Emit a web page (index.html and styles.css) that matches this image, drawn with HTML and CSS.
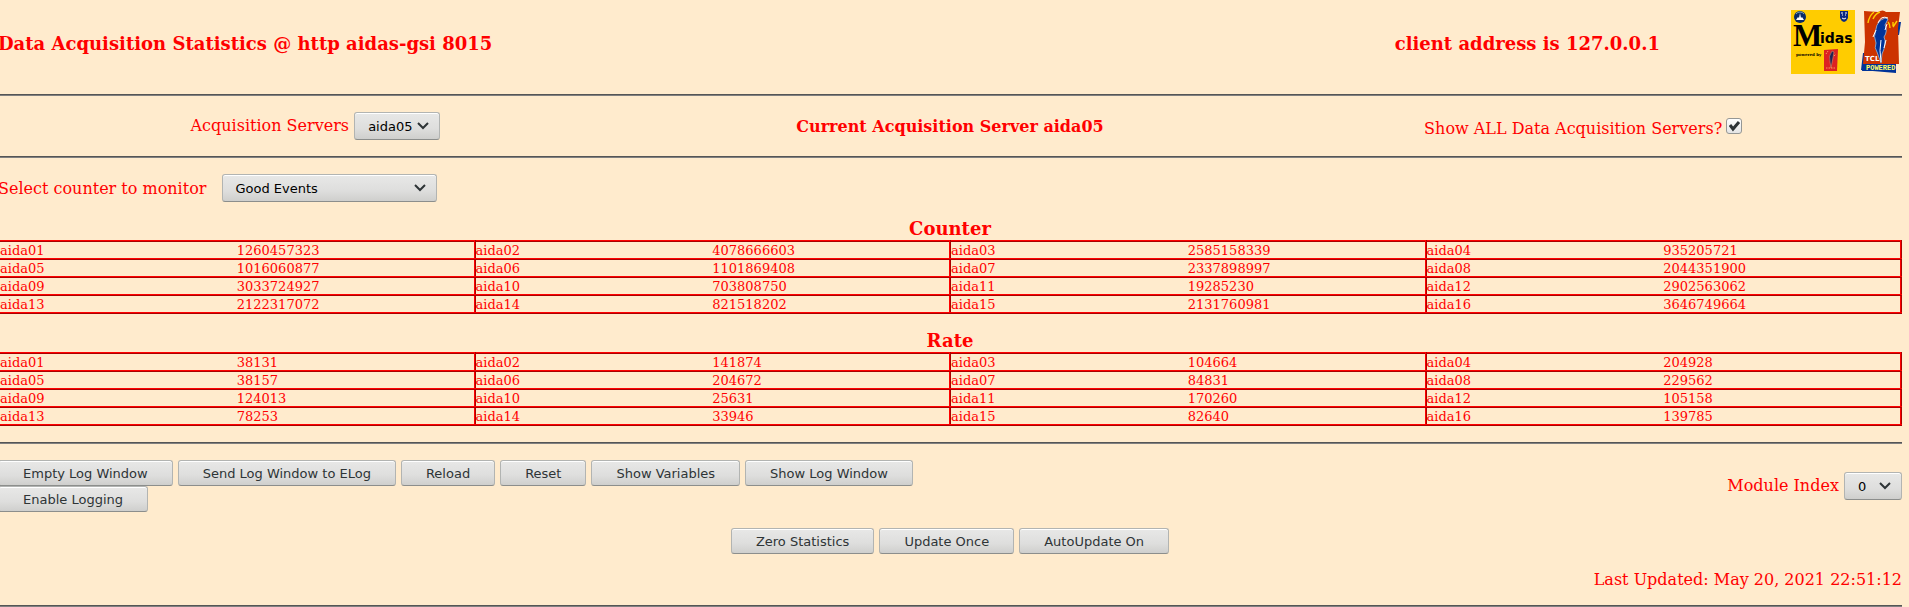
FILE: index.html
```
<!DOCTYPE html>
<html lang="en">
<head>
    <meta charset="UTF-8">
    <meta name="viewport" content="width=device-width, initial-scale=1.0">
    <title>Data Acquisition Statistics @ http aidas-gsi 8015</title>
    <link rel="stylesheet" href="styles.css">
</head>
<body>
    <header class="page-header">
        <h3>Data Acquisition Statistics @ http aidas-gsi 8015</h3>
        <h3 class="client">client address is 127.0.0.1</h3>
        <div class="logos">
            <svg class="logo-midas" viewBox="0 0 64 64" role="img" aria-label="Midas">
                <rect width="64" height="64" fill="#fc0"/>
                <circle cx="9" cy="7" r="6" fill="#0a2a66"/>
                <path d="M5 10 L7 7 L8 8 L9 3 L10 8 L11 7 L13 10 Z" fill="#fff"/>
                <path d="M5 4 A5 5 0 0 1 13 4" fill="none" stroke="#7fa6b8"/>
                <path d="M49 1 H57 V8 Q56 11 53 12 Q50 11 49 8 Z" fill="#0a2a80"/>
                <path d="M50 3 H52 M54 3 H56 M51 5 H52 M54 5 H55 M51 8 L53 9 L55 8" fill="none" stroke="#fff"/>
                <text x="2" y="36" class="midas-m">M</text>
                <text x="29" y="33" class="midas-rest">idas</text>
                <text x="5" y="46" class="midas-small">powered by</text>
                <path d="M33 40 L47 39 L46 61 L33 61 Z" fill="#d22"/>
                <path d="M41 41 Q37 46 39 52 L40 58 Q42 48 43 42 Z" fill="#225" stroke="#e9a070" stroke-width="0.5"/>
                <path d="M35 44 L37 41 M43 46 L45 44 M35 58 H44" stroke="#fb6" stroke-width="0.8" stroke-dasharray="1.5 1"/>
            </svg>
            <svg class="logo-tcl" viewBox="0 0 40 64" role="img" aria-label="TCL powered">
                <path d="M36 12 L40 12 L38 25 L36 25 Z M2 43 L10 43 L35 53 L35 63 L0 60 Z" fill="#039"/>
                <path d="M3 1 L17 2 Q22 -1 25 2 L39 2 L37 18 L38 54 L2 54 L4 32 Z" fill="#c30"/>
                <path d="M24 8 Q16 11 15 19 Q12 27 15 33 Q13 38 16 42 L20 53 L21 44 Q26 33 23 27 Q27 21 24 15 L27 9 Z" fill="#039" stroke="#9bd" stroke-width="0.8"/>
                <path d="M27 8 Q20 5 17 13 M15 20 L12 27 M24 20 L26 14 M20 30 Q18 40 20 52 M25 30 L23 38" fill="none" stroke="#fff"/>
                <path d="M7 13 Q8 6 13 2 M12 9 Q14 4 19 2 M29 18 Q29 14 27 12 M32 16 V12 M32 17 L36 11" fill="none" stroke="#fc0" stroke-width="1.4"/>
                <path d="M2 54 H35 V61 H1 Z" fill="#039"/>
                <text x="4" y="51" class="tcl-name">TCL</text>
                <text x="5" y="60" class="tcl-powered">POWERED</text>
            </svg>
        </div>
    </header>

    <hr>

    <div class="server-bar">
        <div>
            <label for="server">Acquisition Servers</label>
            <select id="server" class="server-select">
                <option>aida05</option>
            </select>
        </div>
        <strong>Current Acquisition Server aida05</strong>
        <div>
            <label for="show-all">Show ALL Data Acquisition Servers?</label><input type="checkbox" id="show-all" checked>
        </div>
    </div>

    <hr>

    <div class="counter-bar">
        <label for="counter">Select counter to monitor</label>
        <select id="counter" class="counter-select">
            <option>Good Events</option>
        </select>
    </div>

    <table class="stats">
        <caption>Counter</caption>
        <tbody>
            <tr><td>aida01</td><td>1260457323</td><td>aida02</td><td>4078666603</td><td>aida03</td><td>2585158339</td><td>aida04</td><td>935205721</td></tr>
            <tr><td>aida05</td><td>1016060877</td><td>aida06</td><td>1101869408</td><td>aida07</td><td>2337898997</td><td>aida08</td><td>2044351900</td></tr>
            <tr><td>aida09</td><td>3033724927</td><td>aida10</td><td>703808750</td><td>aida11</td><td>19285230</td><td>aida12</td><td>2902563062</td></tr>
            <tr><td>aida13</td><td>2122317072</td><td>aida14</td><td>821518202</td><td>aida15</td><td>2131760981</td><td>aida16</td><td>3646749664</td></tr>
        </tbody>
    </table>

    <table class="stats">
        <caption>Rate</caption>
        <tbody>
            <tr><td>aida01</td><td>38131</td><td>aida02</td><td>141874</td><td>aida03</td><td>104664</td><td>aida04</td><td>204928</td></tr>
            <tr><td>aida05</td><td>38157</td><td>aida06</td><td>204672</td><td>aida07</td><td>84831</td><td>aida08</td><td>229562</td></tr>
            <tr><td>aida09</td><td>124013</td><td>aida10</td><td>25631</td><td>aida11</td><td>170260</td><td>aida12</td><td>105158</td></tr>
            <tr><td>aida13</td><td>78253</td><td>aida14</td><td>33946</td><td>aida15</td><td>82640</td><td>aida16</td><td>139785</td></tr>
        </tbody>
    </table>

    <hr>

    <div class="controls">
        <div class="log-buttons">
            <button type="button">Empty Log Window</button>
            <button type="button">Send Log Window to ELog</button>
            <button type="button">Reload</button>
            <button type="button">Reset</button>
            <button type="button">Show Variables</button>
            <button type="button">Show Log Window</button>
            <button type="button">Enable Logging</button>
        </div>
        <div>
            <label for="module">Module Index</label>
            <select id="module" class="module-select">
                <option>0</option>
            </select>
        </div>
    </div>

    <div class="update-buttons">
        <button type="button">Zero Statistics</button>
        <button type="button">Update Once</button>
        <button type="button">AutoUpdate On</button>
    </div>

    <p class="updated">Last Updated: May 20, 2021 22:51:12</p>

    <hr>
</body>
</html>
```

FILE: styles.css
```
* {
    box-sizing: border-box;
}

body {
    margin: 8px 7px 0 -2px;
    background-color: #ffebcd;
    color: #f00;
    font-family: "DejaVu Serif", serif;
    font-size: 16px;
    line-height: 19px;
    overflow: hidden;
}

hr {
    height: 2px;
    margin: 16px 0;
    border: 0;
    border-top: 1px solid #555;
    border-bottom: 1px solid #808080;
}

h3 {
    margin: 0;
    font-size: 18px;
    line-height: 22px;
}

.page-header {
    display: grid;
    grid-template-columns: 12fr 5fr auto;
    align-items: center;
    padding-top: 2px;
}

.client {
    text-align: center;
}

.logos {
    display: flex;
    gap: 6px;
    margin-bottom: 4px;
}

.logo-midas {
    width: 64px;
    height: 64px;
}

.logo-tcl {
    width: 40px;
    height: 64px;
    margin-right: 1px;
}

.midas-m {
    font: bold 31px "Liberation Serif", serif;
}

.midas-rest {
    font: bold 14px "DejaVu Sans", sans-serif;
}

.midas-small {
    font: bold 4px "DejaVu Serif", serif;
}

.tcl-name {
    fill: #fff;
    font: bold 7px "DejaVu Sans", sans-serif;
}

.tcl-powered {
    fill: #ff6;
    font: bold 7px "Liberation Mono", monospace;
}

.server-bar {
    display: grid;
    grid-template-columns: repeat(3, 1fr);
    align-items: center;
    text-align: center;
}

select,
button {
    border: 1px solid #b2b4b2;
    border-bottom-color: #8c8e8c;
    border-radius: 3px;
    background: linear-gradient(#e8e8e7, #dededd 60%, #cfcfcd);
    box-shadow: inset 0 1px #fff;
    font: 13px "DejaVu Sans", sans-serif;
}

button {
    height: 26px;
    padding: 0 24px;
    color: #2e3436;
}

select {
    appearance: none;
    height: 28px;
    padding: 0 12px;
    background-image: url("data:image/svg+xml,%3Csvg xmlns='http://www.w3.org/2000/svg' width='12' height='8'%3E%3Cpath d='M1 1l5 5 5-5' fill='none' stroke='%232e3436' stroke-width='2'/%3E%3C/svg%3E"), linear-gradient(#e8e8e7, #dededd 60%, #cfcfcd);
    background-position: right 10px center, 0 0;
    background-repeat: no-repeat;
    color: #000;
    vertical-align: middle;
}

.server-select,
.module-select {
    padding-left: 13px;
}

.server-select {
    width: 86px;
}

.counter-select {
    width: 215px;
}

.module-select {
    width: 58px;
}

input[type="checkbox"] {
    appearance: none;
    width: 16px;
    height: 16px;
    margin: 4px 3px 0 4px;
    border: 1px solid #959795;
    border-radius: 3px;
    background: url("data:image/svg+xml,%3Csvg xmlns='http://www.w3.org/2000/svg' width='14' height='14'%3E%3Cpath d='M3 6l3 4 6-7' fill='none' stroke='%232e3436' stroke-width='3'/%3E%3C/svg%3E") center no-repeat, linear-gradient(#fff, #e4e4e4);
    vertical-align: baseline;
}

.counter-bar {
    display: flex;
    align-items: center;
    gap: 16px;
}

.stats {
    width: 100%;
    margin-top: 16px;
    border-collapse: collapse;
    table-layout: fixed;
    font-size: 13px;
    line-height: 15px;
}

.stats caption {
    font-size: 18px;
    font-weight: bold;
    line-height: 22px;
}

.stats td {
    padding: 1px 0 0;
    border: 2px ridge #f00;
}

.stats td:nth-child(odd) {
    border-right: 0;
}

.stats td:nth-child(even) {
    border-left: 0;
}

.controls {
    display: flex;
    align-items: center;
    justify-content: space-between;
}

.log-buttons {
    display: flex;
    flex-wrap: wrap;
    column-gap: 5px;
    width: 50%;
}

.update-buttons {
    display: flex;
    justify-content: center;
    gap: 5px;
    margin-top: 16px;
}

.updated {
    margin: 16px 0;
    text-align: right;
}
```
